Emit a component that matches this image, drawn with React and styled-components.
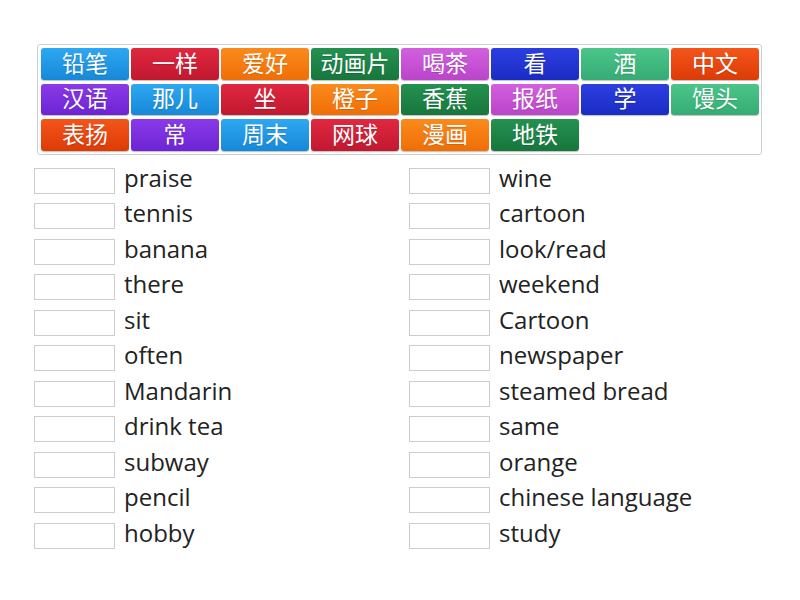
import React from 'react'
import styled, { createGlobalStyle } from 'styled-components'

const GlobalStyle = createGlobalStyle`
    body {
        margin: 0;
        background: #fff;
        font-family: "Open Sans", "Noto Sans CJK SC", sans-serif;
    }
`

const colors = {
    blue: ['#2ea8f2', '#1688d8'],
    red: ['#e0283f', '#c01830'],
    orange: ['#fb8a1c', '#ef6e06'],
    green: ['#24914f', '#17763d'],
    magenta: ['#d260de', '#bb44cb'],
    navy: ['#2c3ee0', '#1b2cc4'],
    mint: ['#4cc58b', '#34ac73'],
    flame: ['#f4551a', '#dc3b06'],
    purple: ['#8a3ae8', '#6d24d4'],
}

const tiles = [
    ['铅笔', 'blue'], ['一样', 'red'], ['爱好', 'orange'], ['动画片', 'green'],
    ['喝茶', 'magenta'], ['看', 'navy'], ['酒', 'mint'], ['中文', 'flame'],
    ['汉语', 'purple'], ['那儿', 'blue'], ['坐', 'red'], ['橙子', 'orange'],
    ['香蕉', 'green'], ['报纸', 'magenta'], ['学', 'navy'], ['馒头', 'mint'],
    ['表扬', 'flame'], ['常', 'purple'], ['周末', 'blue'], ['网球', 'red'],
    ['漫画', 'orange'], ['地铁', 'green'],
]

const leftWords = ['praise', 'tennis', 'banana', 'there', 'sit', 'often', 'Mandarin', 'drink tea', 'subway', 'pencil', 'hobby']
const rightWords = ['wine', 'cartoon', 'look/read', 'weekend', 'Cartoon', 'newspaper', 'steamed bread', 'same', 'orange', 'chinese language', 'study']

const Page = styled.div`
    padding: 44px 0 0 34px;
`
const Bank = styled.div`
    margin-left: 3px;
    width: 718px;
    padding: 3px 2px 3px 3px;
    border: 1px solid #cfcfcf;
    border-radius: 3px;
    display: grid;
    grid-template-columns: repeat(8, 88px);
    grid-auto-rows: 31.5px;
    column-gap: 2px;
    row-gap: 4px;
`
const Tile = styled.div`
    display: flex;
    align-items: center;
    justify-content: center;
    padding-bottom: 3px;
    box-sizing: border-box;
    border-radius: 3px;
    color: #fff;
    font-family: "Noto Sans CJK SC", sans-serif;
    font-size: 23px;
    line-height: 1;
    background: linear-gradient(${({ $c }) => colors[$c][0]}, ${({ $c }) => colors[$c][1]});
    box-shadow: 0 1px 1px rgba(0, 0, 0, 0.25);
    text-shadow: 0 1px 1px rgba(0, 0, 0, 0.15);
`
const Lists = styled.div`
    margin-top: 13px;
    display: grid;
    grid-template-columns: 375px 375px;
`
const Column = styled.div`
    display: flex;
    flex-direction: column;
`
const Row = styled.div`
    display: flex;
    align-items: flex-start;
    height: 35.5px;
    gap: 9px;
`
const Box = styled.div`
    width: 79px;
    height: 24px;
    border: 1px solid #cccccc;
    flex-shrink: 0;
`
const Word = styled.span`
    font-size: 24px;
    line-height: 24px;
    color: #222;
    margin-top: -2px;
`

const App = () => {
    return (
        <Page>
            <GlobalStyle />
            <Bank>
                {tiles.map(([t, c]) => (
                    <Tile key={t} $c={c}>{t}</Tile>
                ))}
            </Bank>
            <Lists>
                <Column>
                    {leftWords.map(w => (
                        <Row key={w}><Box /><Word>{w}</Word></Row>
                    ))}
                </Column>
                <Column>
                    {rightWords.map(w => (
                        <Row key={w}><Box /><Word>{w}</Word></Row>
                    ))}
                </Column>
            </Lists>
        </Page>
    )
}

export default App
